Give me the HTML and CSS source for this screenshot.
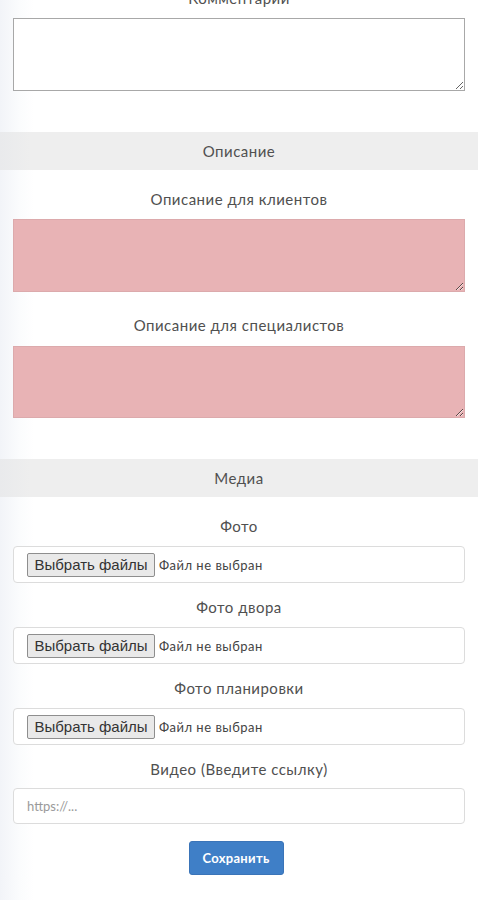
FILE: index.html
```html
<!DOCTYPE html>
<html lang="ru">
<head>
<meta charset="utf-8">
<title>Форма</title>
<link rel="stylesheet" href="styles.css">
</head>
<body>
<form class="form">
  <div class="group group-first">
    <label class="label">Комментарии</label>
    <textarea class="area"></textarea>
  </div>

  <div class="section-title">Описание</div>
  <div class="group group-after-title">
    <label class="label">Описание для клиентов</label>
    <textarea class="area area-error"></textarea>
  </div>
  <div class="group group-desc">
    <label class="label">Описание для специалистов</label>
    <textarea class="area area-error area-short"></textarea>
  </div>

  <div class="section-title">Медиа</div>
  <div class="group group-after-title">
    <label class="label">Фото</label>
    <div class="file"><span class="file-btn">Выбрать файлы</span><span class="file-name">Файл не выбран</span></div>
  </div>
  <div class="group group-file">
    <label class="label">Фото двора</label>
    <div class="file"><span class="file-btn">Выбрать файлы</span><span class="file-name">Файл не выбран</span></div>
  </div>
  <div class="group group-file">
    <label class="label">Фото планировки</label>
    <div class="file"><span class="file-btn">Выбрать файлы</span><span class="file-name">Файл не выбран</span></div>
  </div>
  <div class="group group-file">
    <label class="label label-tight">Видео (Введите ссылку)</label>
    <input class="input" type="text" placeholder="https://...">
  </div>

  <div class="actions">
    <button class="btn" type="button">Сохранить</button>
  </div>
</form>
</body>
</html>
```
FILE: styles.css
```css
* { box-sizing: border-box; }

html, body {
  margin: 0;
  padding: 0;
}

body {
  font-family: Lato, "Noto Sans", sans-serif;
  color: #555;
  background: linear-gradient(to right, #f2f4f8 0, #fbfcfd 20px, #ffffff 34px);
  overflow: hidden;
}

.form {
  display: flex;
  flex-direction: column;
}

.group {
  display: flex;
  flex-direction: column;
  padding: 0 13px;
}

.group-first { margin-top: -12px; margin-bottom: 41px; }
.group-after-title { margin-top: 19px; }
.group-desc { margin-top: 23px; margin-bottom: 41px; }
.group-file { margin-top: 14px; }

.label {
  display: block;
  text-align: center;
  font-size: 15px;
  letter-spacing: 0.5px;
  line-height: 20px;
  color: #505050;
  margin-bottom: 10px;
}

.label-tight { margin-bottom: 9px; }

.area {
  display: block;
  width: 100%;
  height: 73px;
  margin: 0;
  border: 1px solid #a8a8a8;
  background: #fff;
  resize: both;
  font-family: inherit;
}

.group-desc .label { margin-bottom: 11px; }

.area-error {
  background: #e8b3b5;
  border-color: #dcaaac;
}

.area-short { height: 72px; }

.section-title {
  height: 38px;
  line-height: 38px;
  text-align: center;
  font-size: 15px;
  letter-spacing: 0.5px;
  color: #505050;
  background: linear-gradient(to right, #e9eaec 0, #eeeeee 30px, #eeeeee 100%);
}

.file {
  display: flex;
  align-items: center;
  height: 37px;
  padding-left: 13px;
  border: 1px solid #dcdcdc;
  border-radius: 4px;
  background: #fff;
}

.file-btn {
  display: flex;
  align-items: center;
  justify-content: center;
  width: 128px;
  height: 24px;
  background: #e9e9e9;
  border: 1px solid #8e8e8e;
  border-radius: 2px;
  font-family: "Liberation Sans", Arial, sans-serif;
  font-size: 15px;
  color: #333;
}

.file-name {
  margin-left: 4px;
  font-size: 13px;
  letter-spacing: 0.5px;
  color: #444;
}

.input {
  display: block;
  width: 100%;
  height: 36px;
  margin: 0;
  padding: 0 13px;
  border: 1px solid #dcdcdc;
  border-radius: 4px;
  font-family: inherit;
  font-size: 13px;
  color: #555;
  outline: none;
}

.input::placeholder { color: #9a9a9a; }

.actions {
  display: flex;
  justify-content: center;
  margin-top: 17px;
  padding-right: 6px;
}

.btn {
  width: 95px;
  height: 34px;
  border: 1px solid #3a74b8;
  border-radius: 3px;
  background: #3f7fc7;
  color: #fff;
  font-family: inherit;
  font-size: 13px;
  font-weight: bold;
  letter-spacing: 0.3px;
  cursor: pointer;
}
```
